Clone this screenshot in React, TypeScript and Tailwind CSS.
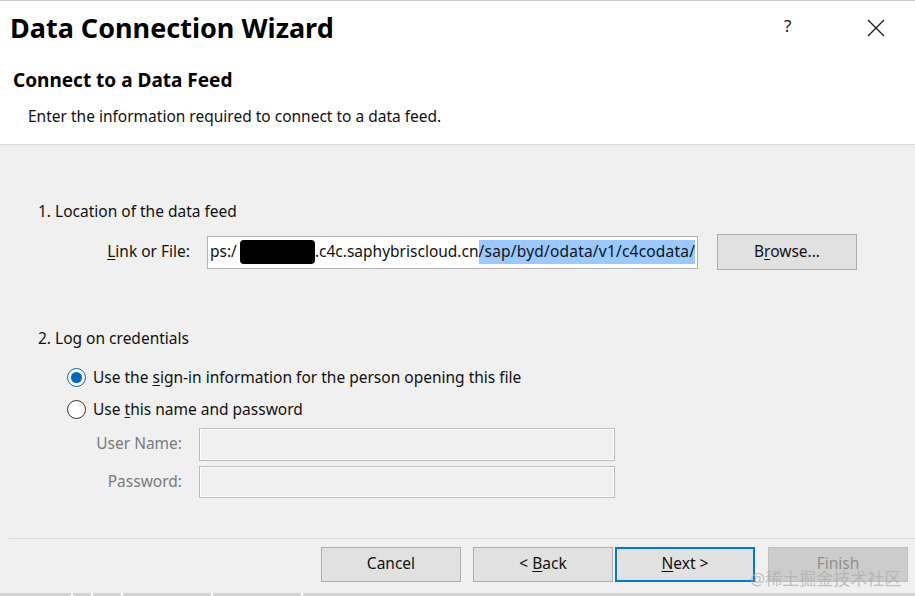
import React from "react";

const font = { fontFamily: '"Noto Sans", "Open Sans", "Noto Sans CJK SC", sans-serif' };

function Radio({ checked }: { checked?: boolean }) {
  return (
    <span className={`flex items-center justify-center w-[19px] h-[19px] rounded-full border-[1.5px] bg-white ${checked ? "border-[#0067c0]" : "border-[#333]"}`}>
      {checked && <span className="w-[11px] h-[11px] rounded-full bg-[#0067c0]" />}
    </span>
  );
}

function Btn({ children, primary, disabled }: { children: React.ReactNode; primary?: boolean; disabled?: boolean }) {
  return (
    <div
      className={`w-[140px] h-[35px] flex items-center justify-center text-[15.5px] ${
        primary
          ? "border-2 border-[#0078d7] bg-[#e1e1e1] text-[#111]"
          : disabled
          ? "border border-[#bfbfbf] bg-[#cccccc] text-[#8f8f8f]"
          : "border border-[#adadad] bg-[#e1e1e1] text-[#111]"
      }`}
    >
      <span className="whitespace-pre">{children}</span>
    </div>
  );
}

export default function App() {
  return (
    <div style={font} className="w-[915px] h-[596px] bg-[#f0f0f0] flex flex-col overflow-hidden relative text-[#111]">
      {/* HEADER */}
      <div className="bg-white border-t border-[#cfcfcf] h-[145px] border-b border-b-[#dcdcdc] shrink-0 relative">
        <div className="pl-[10px] pt-[10px] text-[27px] font-bold leading-[34px] text-black">Data Connection Wizard</div>
        <div className="absolute left-[784px] top-[12px] text-[17px]">?</div>
        <svg className="absolute left-[867px] top-[18px]" width="18" height="18" viewBox="0 0 18 18">
          <path d="M1 1 L17 17 M17 1 L1 17" stroke="#222" strokeWidth="1.4" />
        </svg>
        <div className="pl-[13px] pt-[23px] text-[19px] font-bold leading-[25px] text-black">Connect to a Data Feed</div>
        <div className="pl-[28px] pt-[13px] text-[15.5px] leading-[20px]">Enter the information required to connect to a data feed.</div>
      </div>

      {/* BODY */}
      <div className="flex-1 flex flex-col text-[15.5px]">
        <div className="pl-[38px] pt-[56px] leading-[20px]">1. Location of the data feed</div>
        <div className="flex items-center mt-[13px]">
          <div className="w-[207px] text-right pr-[17px]">
            <span className="underline underline-offset-2">L</span>ink or File:
          </div>
          <div className="w-[491px] h-[33px] bg-white border border-[#b4b4b4] flex items-center pl-[2px] whitespace-nowrap overflow-hidden">
            <span>ps:/</span>
            <span className="inline-block ml-[3px] w-[75px] h-[24px] bg-black rounded-[4px]" />
            <span>.c4c.saphybriscloud.cn</span>
            <span className="bg-[#99c9ff] tracking-[0.2px]">/sap/byd/odata/v1/c4codata/</span>
          </div>
          <div className="ml-[19px] w-[140px] h-[36px] border border-[#adadad] bg-[#e1e1e1] flex items-center justify-center">
            <span>B<span className="underline underline-offset-2">r</span>owse...</span>
          </div>
        </div>

        <div className="pl-[38px] pt-[58px] leading-[20px]">2. Log on credentials</div>
        <div className="flex items-center gap-[7px] pl-[67px] mt-[18px]">
          <Radio checked />
          <span>Use the <span className="underline underline-offset-2">s</span>ign-in information for the person opening this file</span>
        </div>
        <div className="flex items-center gap-[7px] pl-[67px] mt-[9px]">
          <Radio />
          <span>Use <span className="underline underline-offset-2">t</span>his name and password</span>
        </div>
        <div className="flex items-center mt-[6px]">
          <div className="w-[183px] text-right pr-[1px] text-[#7a7a7a]">User Name:</div>
          <div className="ml-[16px] w-[416px] h-[33px] border border-[#bcbcbc] bg-[#f0f0f0] shadow-[inset_0_0_0_1px_#ffffff]" />
        </div>
        <div className="flex items-center mt-[5px]">
          <div className="w-[183px] text-right pr-[1px] text-[#7a7a7a]">Password:</div>
          <div className="ml-[16px] w-[416px] h-[32px] border border-[#bcbcbc] bg-[#f0f0f0] shadow-[inset_0_0_0_1px_#ffffff]" />
        </div>

        <div className="ml-[9px] mt-[40px] border-t border-[#dadada]" />
        <div className="flex mt-[8px] pl-[321px]">
          <Btn>Cancel</Btn>
          <div className="ml-[12px]">
            <Btn>{"< "}<span className="underline underline-offset-2">B</span>ack</Btn>
          </div>
          <div className="ml-[2px]">
            <Btn primary><span className="underline underline-offset-2">N</span>ext &gt;</Btn>
          </div>
          <div className="ml-[13px]">
            <Btn disabled>Finish</Btn>
          </div>
        </div>
      </div>

      {/* bottom strip */}
      <div className="absolute left-0 right-0 bottom-0 h-[3px] flex gap-[2px] bg-white">
        <div className="w-[71px] bg-[#d4d4d4]" />
        <div className="w-[18px] bg-[#d4d4d4]" />
        <div className="w-[28px] bg-[#d4d4d4]" />
        <div className="w-[88px] bg-[#d4d4d4]" />
        <div className="w-[88px] bg-[#d4d4d4]" />
        <div className="flex-1 bg-[#d4d4d4]" />
      </div>

      <div className="absolute left-[750px] top-[568px] text-[17px] leading-[22px] text-[#b0b0b0]/80 whitespace-nowrap">@稀土掘金技术社区</div>
    </div>
  );
}
